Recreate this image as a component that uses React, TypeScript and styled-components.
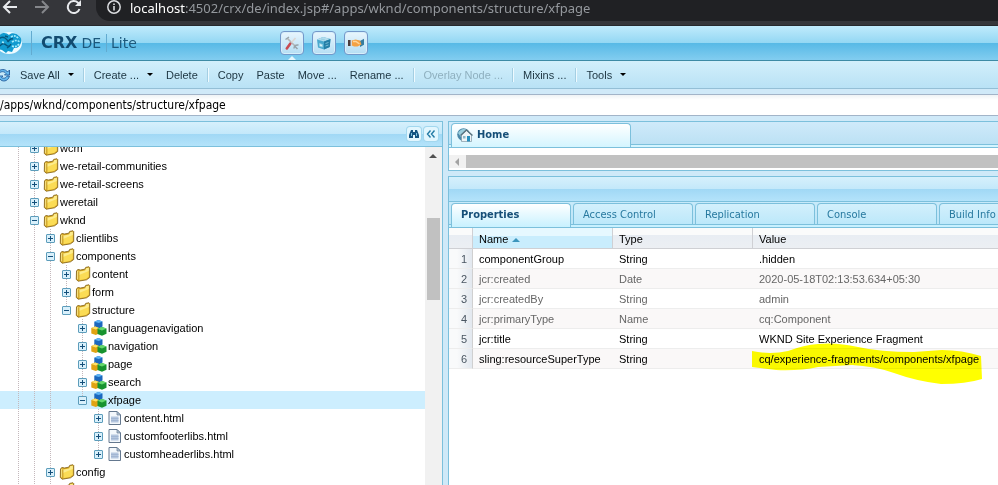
import React from 'react';
import styled, { createGlobalStyle, css } from 'styled-components';

const ui = '"Liberation Sans", Arial, sans-serif';
const humanist = '"DejaVu Sans Condensed", "Noto Sans", sans-serif';
const line = '#7cc0dc';

const GlobalStyle = createGlobalStyle`
  * { box-sizing: border-box; }
  body { margin: 0; background: #fff; font: 11px/18px ${ui}; color: #000; }
  button, input { font: inherit; color: inherit; border: 0; padding: 0; margin: 0; background: none; }
  svg { display: block; flex: none; }
`;

const Shell = styled.div`
  height: 100vh;
  display: flex;
  flex-direction: column;
  overflow: hidden;
  background: #cfe9f8;
`;

/* browser bar */
const BrowserBar = styled.div`
  display: flex;
  height: 26px;
  flex: none;
  background: #35363a;
  border-bottom: 1px solid #26282c;
`;
const NavButtons = styled.div`
  display: flex;
  gap: 16px;
  width: 96px;
  padding-left: 2px;
`;
const NavButton = styled.button`
  width: 16px;
  height: 15px;
`;
const Address = styled.div`
  flex: 1;
  display: flex;
  gap: 9px;
  height: 21px;
  padding-left: 11px;
  background: #202124;
  border-bottom-left-radius: 14px;
  color: #94989d;
  font: 13px/16px "Noto Sans", sans-serif;
  white-space: nowrap;
  b { font-weight: 400; color: #fff; }
`;

/* brand header */
const Header = styled.header`
  display: flex;
  height: 35px;
  flex: none;
  align-items: center;
  background: linear-gradient(#c0ebfc 0, #93d7f3 17px, #57b9e6 17px, #82cdf0 100%);
  border-bottom: 1px solid #3d8ba5;
`;
const Brand = styled.div`
  display: flex;
  align-items: center;
  width: 280px;
  color: #1c587c;
  font: 14px/20px "DejaVu Sans", sans-serif;
`;
const Rule = styled.span<{ $tall?: boolean }>`
  width: 1px;
  height: ${p => (p.$tall ? 24 : 18)}px;
  background: #62abd0;
`;
const BrandStrong = styled.strong`
  font-size: 16px;
  margin-left: 9px;
  color: #124b70;
`;
const BrandPart = styled.span`
  margin: 0 5px 0 4px;
`;
const Modes = styled.div`
  display: flex;
  gap: 8px;
`;
const ModeButton = styled.button<{ $active?: boolean }>`
  position: relative;
  width: 24px;
  height: 24px;
  padding: 3px;
  border: 1px solid #7398ca;
  border-radius: 4px;
  background: linear-gradient(#e9f6fd, #b5def4);
  box-shadow: inset 0 0 0 1px #d7effa;
  ${p => p.$active && css`
    &::after {
      content: '';
      position: absolute;
      left: 7px;
      bottom: -6px;
      border: 4px solid transparent;
      border-top: 0;
      border-bottom-color: #e4f6fd;
    }
  `}
`;

/* toolbar */
const Toolbar = styled.div`
  display: flex;
  align-items: center;
  height: 28px;
  flex: none;
  background: linear-gradient(#d2effb, #b9e2f5);
  border-bottom: 1px solid #94bfd6;
  color: #1c3440;
`;
const ToolButton = styled.button`
  display: flex;
  align-items: center;
  gap: 8px;
  padding: 0 7px 0 6px;
  white-space: nowrap;
  &:disabled { color: #8fb0bf; }
`;
const Caret = styled.span`
  border: 3px solid transparent;
  border-top-color: #000;
  border-bottom: 0;
`;
const ToolSeparator = styled.span`
  width: 2px;
  height: 14px;
  margin: 0 3px 0 2px;
  border-left: 1px solid #a4cfe3;
  background: #eefaff;
`;
const PathBar = styled.div`
  flex: none;
  padding: 5px 0;
`;
const PathInput = styled.input`
  display: block;
  width: 100%;
  height: 22px;
  background: linear-gradient(#eef3f5, #fff 5px);
  border-top: 1px solid #a2b4c8;
  border-bottom: 1px solid #a2b4c8;
  font: 12px/20px ${humanist};
`;

/* workspace */
const Workspace = styled.main`
  flex: 1;
  min-height: 0;
  display: grid;
  grid-template-columns: 443px minmax(0, 1fr);
  gap: 5px;
`;
const glossy = css`
  background: linear-gradient(#d6f0fc 0, #c3e8fa 12px, #a0d8f5 12px, #b4e3fa 100%);
`;
const Side = styled.section`
  display: flex;
  flex-direction: column;
  min-height: 0;
  border: 1px solid ${line};
  border-width: 1px 1px 0 0;
  background: #fff;
`;
const SideHeader = styled.div`
  ${glossy}
  display: flex;
  justify-content: flex-end;
  gap: 3px;
  height: 25px;
  flex: none;
  padding: 5px 4px 0 0;
  border-bottom: 1px solid ${line};
`;
const MiniButton = styled.button`
  width: 14px;
  height: 14px;
  border-radius: 3px;
  background: #e2f6fe;
  box-shadow: 0 0 0 1px #a2d7ee;
`;
const SideBody = styled.div`
  flex: 1;
  min-height: 0;
  display: flex;
  overflow: hidden;
`;
const Tree = styled.ul`
  flex: 1;
  list-style: none;
  margin: -8px 0 0;
  padding: 0;
`;
const TreeRow = styled.li<{ $selected?: boolean }>`
  display: flex;
  align-items: center;
  height: 18px;
  padding-left: 10px;
  white-space: nowrap;
  background: ${p => (p.$selected ? '#cdeefe' : 'transparent')};
`;
const dotted = css`
  background: repeating-linear-gradient(#c4b8bc 0 1px, transparent 1px 2px) 8px 0 / 1px 100% no-repeat;
`;
const Guide = styled.span<{ $on: boolean }>`
  width: 16px;
  height: 18px;
  flex: none;
  ${p => p.$on && dotted}
`;
const Toggle = styled.button<{ $last?: boolean }>`
  display: grid;
  place-items: center;
  width: 17px;
  height: 18px;
  flex: none;
  ${dotted}
  ${p => p.$last && css`background-size: 1px 9px;`}
`;
const TreeLabel = styled.span`
  margin-left: 1px;
`;
const Scroller = styled.div`
  width: 17px;
  height: 100%;
  flex: none;
  padding: 7px 2px 0 2px;
  background: #f1f1f1;
`;
const ScrollArrow = styled.div`
  width: 0;
  margin-left: 2px;
  border: 4px solid transparent;
  border-top: 0;
  border-bottom-color: #505050;
`;
const ScrollThumb = styled.div`
  height: 82px;
  margin-top: 60px;
  background: #c1c1c1;
`;

const Content = styled.div`
  display: flex;
  flex-direction: column;
  gap: 5px;
  min-width: 0;
  min-height: 0;
`;
const Editor = styled.section`
  border: 1px solid ${line};
  border-right: 0;
  background: #fff;
`;
const HomeStrip = styled.div`
  display: flex;
  height: 26px;
  padding: 1px 0 0 2px;
  background: linear-gradient(#cfeafa, #bce1f4 22px, ${line} 22px 23px, #d4f5ff 23px);
  border-bottom: 1px solid ${line};
`;
const HomeTab = styled.button`
  display: flex;
  align-items: center;
  gap: 4px;
  width: 180px;
  padding: 0 5px 2px;
  border: 1px solid ${line};
  border-bottom: 0;
  border-radius: 4px 4px 0 0;
  background: linear-gradient(#fff, #d4f5ff);
  color: #164f78;
  font: bold 11px/18px ${humanist};
`;
const HorizontalScroll = styled.div`
  display: flex;
  align-items: center;
  margin: 7px 0 2px;
  height: 13px;
  background: #f1f1f1;
`;
const LeftArrow = styled.div`
  width: 17px;
  padding-left: 6px;
  &::before {
    content: '';
    display: block;
    width: 0;
    border: 4px solid transparent;
    border-left: 0;
    border-right-color: #a3a3a3;
  }
`;
const HorizontalThumb = styled.div`
  flex: 1;
  height: 13px;
  background: #c1c1c1;
`;

const Details = styled.section`
  flex: 1;
  min-height: 0;
  overflow: hidden;
  border: 1px solid ${line};
  border-width: 1px 0 0 1px;
  background: #fff;
`;
const DetailsHeader = styled.div`
  ${glossy}
  height: 25px;
  border-bottom: 1px solid ${line};
`;
const Tabs = styled.div`
  display: flex;
  gap: 2px;
  height: 26px;
  padding: 1px 0 0 2px;
  overflow: hidden;
  background: linear-gradient(#c8eafa, #bce5f7 22px, ${line} 22px 23px, #c8f1ff 23px);
  border-bottom: 1px solid ${line};
`;
const Tab = styled.button<{ $active?: boolean }>`
  width: 120px;
  height: ${p => (p.$active ? 24 : 21)}px;
  flex: none;
  padding: 2px 9px 0;
  padding-bottom: ${p => (p.$active ? 4 : 0)}px;
  text-align: left;
  border: 1px solid ${line};
  border-bottom: 0;
  border-radius: 4px 4px 0 0;
  background: ${p => (p.$active ? 'linear-gradient(#fff, #c8f1ff)' : 'linear-gradient(#d3f0fc, #bce8fa)')};
  color: ${p => (p.$active ? '#164f78' : '#27799f')};
  font: ${p => (p.$active ? 'bold' : 'normal')} 11px/18px ${humanist};
`;
const Table = styled.table`
  width: 100%;
  table-layout: fixed;
  border-collapse: separate;
  border-spacing: 0;
  text-align: left;
`;
const NumberCol = styled.col`width: 23px;`;
const FieldCol = styled.col`width: 140px;`;
const HeadCell = styled.th<{ $sorted?: boolean }>`
  height: 21px;
  padding: 2px 6px 0;
  font-weight: 400;
  border: 1px solid #cfd0d4;
  border-width: 0 0 1px 1px;
  background: ${p => (p.$sorted ? 'linear-gradient(#e6f8ff 40%, #c9edfd 40%)' : 'linear-gradient(#fafbfb 35%, #e8edf3 35%, #eceff3)')};
  &:first-child { border-left: 0; }
`;
const SortMark = styled.span`
  display: inline-block;
  margin-left: 4px;
  vertical-align: 1px;
  border: 4px solid transparent;
  border-top: 0;
  border-bottom-color: #3b95bd;
`;
const Row = styled.tr<{ $locked?: boolean }>`
  color: ${p => (p.$locked ? '#666' : '#000')};
  &:nth-child(even) { background: #faf8f8; }
`;
const NumberCell = styled.td`
  height: 20px;
  padding: 0 5px 0 0;
  text-align: right;
  color: #4a5662;
  background: linear-gradient(90deg, #f9fafb 35%, #e2e8ef);
  border-bottom: 1px solid #ededed;
`;
const Cell = styled.td`
  position: relative;
  height: 20px;
  padding: 1px 7px 0;
  border-bottom: 1px solid #ededed;
  white-space: nowrap;
  &:nth-child(2) { border-left: 1px solid #d0d0d0; padding-left: 6px; }
`;
const Marker = styled.svg`
  position: absolute;
  left: 0;
  top: -8px;
  mix-blend-mode: multiply;
  pointer-events: none;
`;

/* icons */
const Folder = () => (
  <svg width="16" height="16" viewBox="0 0 16 16">
    <path d="M1.500 4.800 3 3.500 5.500 4 9.800 3.200 10.700 1.400 14 .8 14.700 1.500V11.500L11.500 13.800 3.200 15.200 1.300 13.500Z" fill="#d9a91f" stroke="#8a6a20" strokeWidth=".9" />
    <path d="M4 5.800 10.300 4.500 11.200 2.300 13.800 1.800V10.800L11 13 4 14.200Z" fill="#fbdc55" />
    <path d="M4 5.800 10.300 4.500 11.200 2.300 13.800 1.800V5L4 9Z" fill="#fdec8c" />
    <path d="M2.100 5.300 3.300 4.600V13.800L2.100 13Z" fill="#f8e486" />
    <path d="M4 14.200V6" stroke="#b58a20" strokeWidth=".6" />
  </svg>
);
const Blocks = () => (
  <svg width="16" height="16" viewBox="0 0 16 16">
    <path d="M3.300 1.800 7.300 0l4.200 1.500v5L7.800 8.500 3.300 7Z" fill="#1c68bd" />
    <path d="M3.300 1.800 7.300 0l4.200 1.500L7.800 3Z" fill="#5db3f4" />
    <path d="m.3 8 4-1.500L8 8v5.500L4.800 15 .3 13.500Z" fill="#e0a312" />
    <path d="m.3 8 4-1.500L8 8 4.800 9.600Z" fill="#ffe168" />
    <path d="m6.500 8.800 4.500-1.800 4.500 1.500v5.200L11 15.700 6.500 14Z" fill="#17932f" />
    <path d="m6.500 8.800 4.500-1.800 4.500 1.500-4.500 2Z" fill="#66d86c" />
  </svg>
);
const FileIcon = () => (
  <svg width="16" height="16" viewBox="0 0 16 16">
    <path d="M2 1.500H10L13.500 5V14.500H2Z" fill="#f4f8fc" stroke="#64788f" />
    <path d="M10 1.500V5H13.500Z" fill="#b4c6d9" stroke="#64788f" strokeWidth=".7" />
    <path d="M4 6.500h7.500v6H4Z" fill="#b4c6df" />
    <path d="M4 8.500h7.500M4 10.500h7.500" stroke="#9db2cf" strokeWidth=".8" />
  </svg>
);
const ToggleBox = ({ open }: { open: boolean }) => (
  <svg width="9" height="9" viewBox="0 0 9 9">
    <rect x=".5" y=".5" width="8" height="8" rx=".5" fill="#d9f0fb" stroke="#5d9dbb" />
    <path d={open ? 'M2 4.500h5' : 'M2 4.500h5M4.500 2v5'} stroke="#144f7a" />
  </svg>
);
const Logo = () => (
  <svg width="31" height="26" viewBox="0 0 31 26">
    <ellipse cx="9" cy="13" rx="13" ry="11" fill="#effbff" />
    <path d="M-2 8C0 2 6 2 9 5c2-3 8-2 10 1 3 2 3 6 1 9-2 3-4 3-6 3l-2 4-4-1-2 2-4-3-4-1Z" fill="#129bd0" />
    <path d="M-1 9q3-3 6-1t3 4q2-4 5-3M0 16q3-4 6-1t5-1M5 6l3 1M7 18l3-2" fill="none" stroke="#07587f" strokeWidth="1.400" />
    <path d="M11 7q4-3 8 2M12 12q4-3 8 0M12 16q4 2 7-2M2 12l3 1" fill="none" stroke="#a5ecfc" strokeWidth="1.700" strokeDasharray="2 1" />
  </svg>
);
const Wrench = () => (
  <svg width="16" height="16" viewBox="0 0 16 16">
    <path d="m3.500 3.500 8 8" stroke="#b5b6b7" strokeWidth="1.700" />
    <path d="M1.500 4.500 5 2M10 13.500q0-4 4.500-3.500M10.500 11l3 3" stroke="#98a4aa" strokeWidth="1.500" fill="none" />
    <path d="m7.500 7.500 4-4.500" stroke="#ddd8d4" strokeWidth="1.700" />
    <path d="m2.800 13.500 3.400-4.800" stroke="#c94b52" strokeWidth="2.600" strokeLinecap="round" />
  </svg>
);
const Package = () => (
  <svg width="16" height="16" viewBox="0 0 16 16">
    <path d="m1 4.500 6-2.500 7.500 2-.8 8L8 14.500 2 12.500Z" fill="#4aa9ce" />
    <path d="m1 4.500 6-2.500 7.500 2L8 6.500Z" fill="#b2dcec" />
    <path d="m8 6.500 6.500-2.500-.8 8L8 14.500Z" fill="#247ea6" />
    <path d="M3.500 8.500l3 1v2.500l-3-.8ZM9.500 8.500l3-1M9.500 11l3-1M5 4l4 1" fill="#d9f4fa" stroke="#8ccde2" strokeWidth=".8" />
  </svg>
);
const Handshake = () => (
  <svg width="16" height="16" viewBox="0 0 16 16">
    <path d="M-.5 5H3.500v6H-.5Z" fill="#4b3c3c" />
    <path d="M2.500 5H5v6H2.500Z" fill="#d9d8d4" />
    <path d="m12 6 4.500-2.500v6L12 12Z" fill="#367da0" />
    <path d="m4 5.500 3.500-1L12 5.500l1.500 4-4 2H6l-2-1Z" fill="#f5a142" />
    <path d="M5 6.500h3l3.500 2.500" fill="none" stroke="#ffd69a" strokeWidth="1.500" />
  </svg>
);
const Refresh = () => (
  <svg width="14" height="18" viewBox="0 0 14 18">
    <path d="M-3 7C0 2 6 3 7.500 6L9.500 4V9H4.500L6 7.500C4 5 1 5-2 8ZM-2 10H3L1.500 11.500C4 13 6 12 7 10H9.500C8 16 2 16 0 13L-2 15Z" fill="#64b8ed" stroke="#255c9c" strokeWidth=".9" />
  </svg>
);
const Binoculars = () => (
  <svg width="14" height="14" viewBox="0 0 14 14">
    <path d="M4 3h2v2h2V3h2l2 5v3H8V8H6v3H2V8Z" fill="#145482" />
    <path d="M4.500 6v3M9.500 6v3" stroke="#7cc4e3" />
  </svg>
);
const Collapse = () => (
  <svg width="14" height="14" viewBox="0 0 14 14">
    <path d="M6.500 3.500 3.500 7l3 3.500M10.500 3.500 7.500 7l3 3.500" fill="none" stroke="#247ba5" strokeWidth="1.400" />
  </svg>
);
const House = () => (
  <svg width="16" height="16" viewBox="0 0 16 16">
    <circle cx="6.500" cy="7.500" r="6.300" fill="#4b87a8" />
    <path d="M1 6q4-6 9-3L4 10Z" fill="#9ccfde" />
    <path d="m4.500 8 5-4.500L14.500 8v6.500h-10Z" fill="#eef4f6" stroke="#7f98a4" strokeWidth=".7" />
    <path d="m3.500 8.500 6-5.500L15.500 8.500" fill="none" stroke="#59737f" strokeWidth="1.300" />
    <path d="M10 9h3v5.500h-3Z" fill="#288fbd" />
    <path d="M6 9h2.500v2.500H6Z" fill="#8db8c9" />
  </svg>
);
const Info = () => (
  <svg width="14" height="14" viewBox="0 0 14 14">
    <circle cx="7" cy="7" r="6.200" fill="none" stroke="#dadcdf" strokeWidth="1.500" />
    <path d="M7 6v4.500M7 3.500v1.500" stroke="#dadcdf" strokeWidth="1.600" />
  </svg>
);

type Kind = 'folder' | 'component' | 'file';
type TreeNode = { label: string; level: number; kind: Kind; open?: boolean; selected?: boolean; last?: boolean; guides: number[] };

const nodes: TreeNode[] = [
  { label: 'wcm', level: 1, kind: 'folder', guides: [0] },
  { label: 'we-retail-communities', level: 1, kind: 'folder', guides: [0] },
  { label: 'we-retail-screens', level: 1, kind: 'folder', guides: [0] },
  { label: 'weretail', level: 1, kind: 'folder', guides: [0] },
  { label: 'wknd', level: 1, kind: 'folder', open: true, guides: [0] },
  { label: 'clientlibs', level: 2, kind: 'folder', guides: [0, 1] },
  { label: 'components', level: 2, kind: 'folder', open: true, guides: [0, 1] },
  { label: 'content', level: 3, kind: 'folder', guides: [0, 1, 2] },
  { label: 'form', level: 3, kind: 'folder', guides: [0, 1, 2] },
  { label: 'structure', level: 3, kind: 'folder', open: true, last: true, guides: [0, 1, 2] },
  { label: 'languagenavigation', level: 4, kind: 'component', guides: [0, 1, 2] },
  { label: 'navigation', level: 4, kind: 'component', guides: [0, 1, 2] },
  { label: 'page', level: 4, kind: 'component', guides: [0, 1, 2] },
  { label: 'search', level: 4, kind: 'component', guides: [0, 1, 2] },
  { label: 'xfpage', level: 4, kind: 'component', open: true, selected: true, last: true, guides: [0, 1, 2] },
  { label: 'content.html', level: 5, kind: 'file', guides: [0, 1, 2] },
  { label: 'customfooterlibs.html', level: 5, kind: 'file', guides: [0, 1, 2] },
  { label: 'customheaderlibs.html', level: 5, kind: 'file', last: true, guides: [0, 1, 2] },
  { label: 'config', level: 2, kind: 'folder', guides: [0, 1] },
  { label: '', level: 2, kind: 'folder', guides: [0, 1] },
];

const properties = [
  { name: 'componentGroup', type: 'String', value: '.hidden' },
  { name: 'jcr:created', type: 'Date', value: '2020-05-18T02:13:53.634+05:30', locked: true },
  { name: 'jcr:createdBy', type: 'String', value: 'admin', locked: true },
  { name: 'jcr:primaryType', type: 'Name', value: 'cq:Component', locked: true },
  { name: 'jcr:title', type: 'String', value: 'WKND Site Experience Fragment' },
  { name: 'sling:resourceSuperType', type: 'String', value: 'cq/experience-fragments/components/xfpage', marked: true },
];

const kindIcons = { folder: Folder, component: Blocks, file: FileIcon };

function RepositoryTree() {
  return (
    <Tree>
      {nodes.map((n, i) => {
        const Icon = kindIcons[n.kind];
        return (
          <TreeRow key={i} $selected={n.selected}>
            {Array.from({ length: n.level }, (_, g) => (
              <Guide key={g} $on={n.guides.includes(g)} />
            ))}
            <Toggle $last={n.last} aria-expanded={!!n.open} aria-label={n.label}>
              <ToggleBox open={!!n.open} />
            </Toggle>
            <Icon />
            <TreeLabel>{n.label}</TreeLabel>
          </TreeRow>
        );
      })}
    </Tree>
  );
}

export default function App() {
  return (
    <Shell>
      <GlobalStyle />
      <BrowserBar>
        <NavButtons>
          <NavButton aria-label="Back">
            <svg width="16" height="15" viewBox="0 0 16 15"><path d="M15 7H2M8 1 2 7l6 6" fill="none" stroke="#e8eaed" strokeWidth="2" /></svg>
          </NavButton>
          <NavButton aria-label="Forward">
            <svg width="16" height="15" viewBox="0 0 16 15"><path d="M1 7h13M8 1l6 6-6 6" fill="none" stroke="#85878b" strokeWidth="2" /></svg>
          </NavButton>
          <NavButton aria-label="Reload">
            <svg width="16" height="15" viewBox="0 0 16 15"><path d="M13.500 9A6 6 0 1 1 12 2.700L14 5" fill="none" stroke="#e8eaed" strokeWidth="2" /><path d="M15 0v6H9Z" fill="#e8eaed" /></svg>
          </NavButton>
        </NavButtons>
        <Address>
          <Info />
          <span><b>localhost</b>:4502/crx/de/index.jsp#/apps/wknd/components/structure/xfpage</span>
        </Address>
      </BrowserBar>

      <Header>
        <Brand>
          <Logo />
          <Rule $tall />
          <BrandStrong>CRX</BrandStrong>
          <BrandPart>DE</BrandPart>
          <Rule />
          <BrandPart>Lite</BrandPart>
        </Brand>
        <Modes>
          <ModeButton $active aria-label="CRXDE Lite"><Wrench /></ModeButton>
          <ModeButton aria-label="Package Manager"><Package /></ModeButton>
          <ModeButton aria-label="Package Share"><Handshake /></ModeButton>
        </Modes>
      </Header>

      <Toolbar>
        <Refresh />
        <ToolButton>Save All <Caret /></ToolButton>
        <ToolSeparator />
        <ToolButton>Create ... <Caret /></ToolButton>
        <ToolButton>Delete</ToolButton>
        <ToolSeparator />
        <ToolButton>Copy</ToolButton>
        <ToolButton>Paste</ToolButton>
        <ToolButton>Move ...</ToolButton>
        <ToolButton>Rename ...</ToolButton>
        <ToolSeparator />
        <ToolButton disabled>Overlay Node ...</ToolButton>
        <ToolSeparator />
        <ToolButton>Mixins ...</ToolButton>
        <ToolSeparator />
        <ToolButton>Tools <Caret /></ToolButton>
      </Toolbar>

      <PathBar>
        <PathInput aria-label="Path" defaultValue="/apps/wknd/components/structure/xfpage" />
      </PathBar>

      <Workspace>
        <Side>
          <SideHeader>
            <MiniButton aria-label="Find"><Binoculars /></MiniButton>
            <MiniButton aria-label="Collapse"><Collapse /></MiniButton>
          </SideHeader>
          <SideBody>
            <RepositoryTree />
            <Scroller>
              <ScrollArrow />
              <ScrollThumb />
            </Scroller>
          </SideBody>
        </Side>

        <Content>
          <Editor>
            <HomeStrip>
              <HomeTab><House />Home</HomeTab>
            </HomeStrip>
            <HorizontalScroll>
              <LeftArrow />
              <HorizontalThumb />
            </HorizontalScroll>
          </Editor>
          <Details>
            <DetailsHeader />
            <Tabs>
              <Tab $active>Properties</Tab>
              <Tab>Access Control</Tab>
              <Tab>Replication</Tab>
              <Tab>Console</Tab>
              <Tab>Build Info</Tab>
            </Tabs>
            <Table>
              <colgroup>
                <NumberCol />
                <FieldCol />
                <FieldCol />
                <col />
              </colgroup>
              <thead>
                <tr>
                  <HeadCell />
                  <HeadCell $sorted>Name<SortMark /></HeadCell>
                  <HeadCell>Type</HeadCell>
                  <HeadCell>Value</HeadCell>
                </tr>
              </thead>
              <tbody>
                {properties.map((p, i) => (
                  <Row key={p.name} $locked={p.locked}>
                    <NumberCell>{i + 1}</NumberCell>
                    <Cell>{p.name}</Cell>
                    <Cell>{p.type}</Cell>
                    <Cell>
                      {p.value}
                      {p.marked && (
                        <Marker width="232" height="46" viewBox="0 0 232 46">
                          <path d="M0 10Q18 14 36 10Q52 4 66 3Q84 1 106 6Q128 11 162 11L190 9Q210 9 229 15L230 38Q214 43 189 43Q164 40 142 32Q122 25 100 24L66 26Q48 30 24 29L0 26Z" fill="#ff0" />
                        </Marker>
                      )}
                    </Cell>
                  </Row>
                ))}
              </tbody>
            </Table>
          </Details>
        </Content>
      </Workspace>
    </Shell>
  );
}
